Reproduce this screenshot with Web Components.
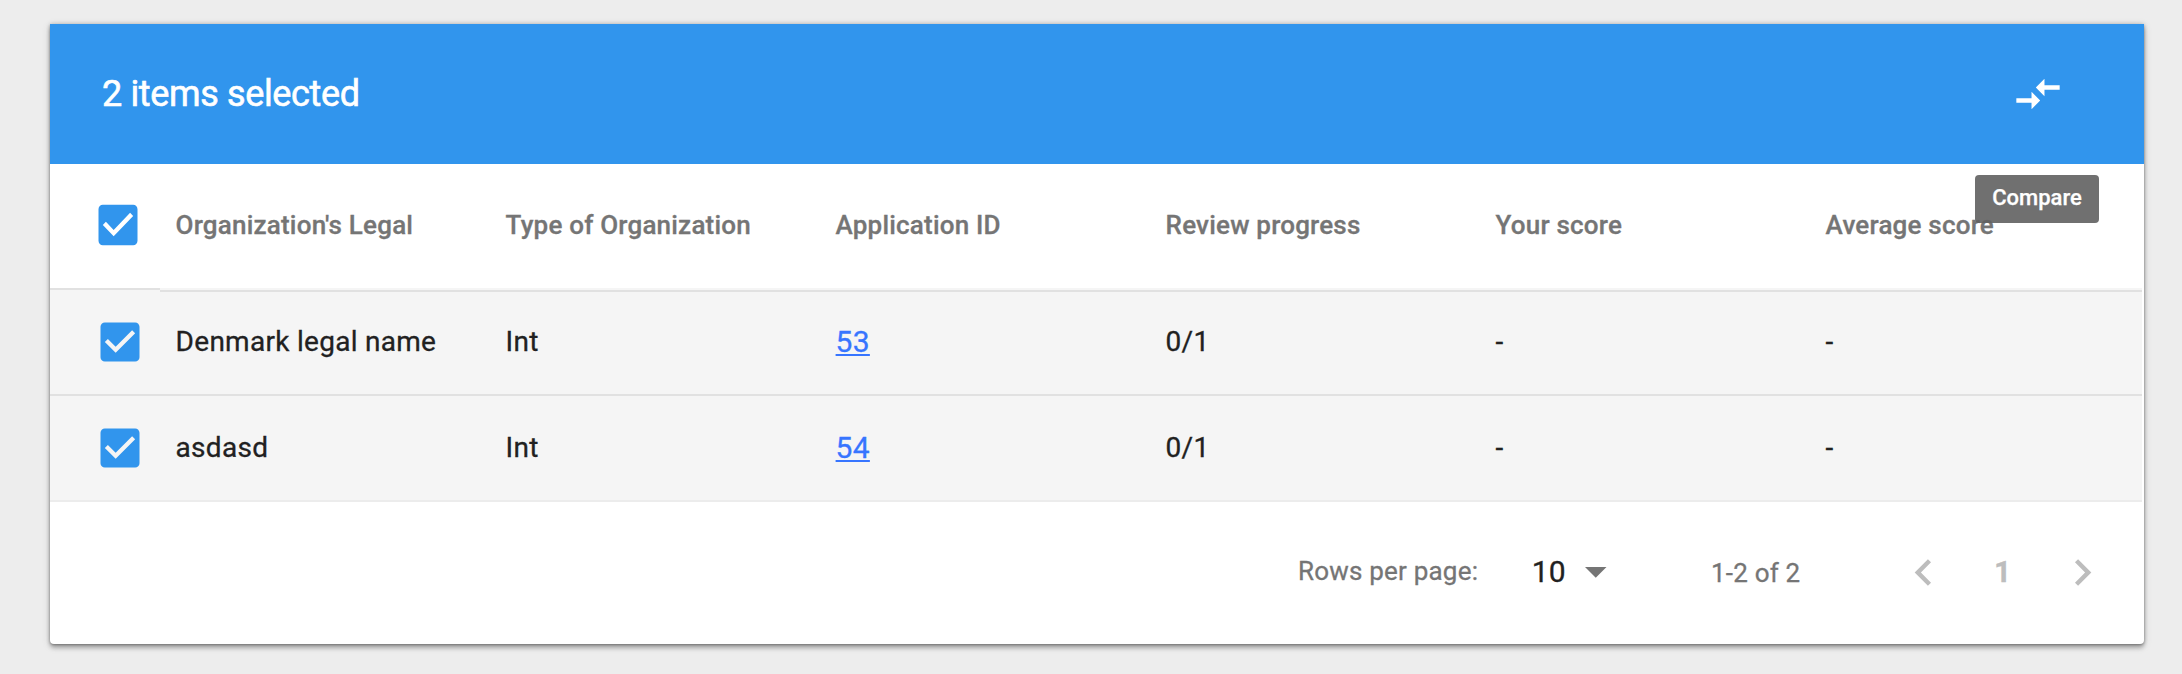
<!DOCTYPE html>
<html lang="en">
<head>
<meta charset="utf-8">
<title>Applications</title>
<style>
html,body{margin:0;padding:0}
body{background:#ededed;font-family:Roboto,"Liberation Sans",sans-serif;width:2182px;height:674px;overflow:hidden;color:#212121}
</style>
</head>
<body>
<data-card>
  <selection-bar slot="bar" label="2 items selected" tip="Compare"></selection-bar>
  <table-head></table-head>
  <table-row name="Denmark legal name" type="Int" app="53" progress="0/1" mine="-" average="-"></table-row>
  <table-row name="asdasd" type="Int" app="54" progress="0/1" mine="-" average="-" last></table-row>
  <table-pager slot="footer"></table-pager>
</data-card>
<script>
const define = (name, render) => customElements.define(name, class extends HTMLElement {
  connectedCallback() {
    if (this.shadowRoot) return;
    this.attachShadow({ mode: 'open' }).innerHTML = render(this);
  }
});
const attr = (el, n) => el.getAttribute(n) || '';

define('data-card', () => `
<style>
:host{display:flex;flex-direction:column;box-sizing:border-box;width:2094px;height:620px;margin:24px 0 0 50px;background:#fff;border-radius:0 0 4px 4px;
box-shadow:0 2px 10px rgba(0,0,0,.12),0 4px 4px rgba(0,0,0,.24),0 0 4px rgba(0,0,0,.2),0 1px 2px rgba(0,0,0,.2)}
.rows{padding-right:2px}
</style>
<slot name="bar"></slot><div class="rows"><slot></slot></div><slot name="footer"></slot>`);

define('selection-bar', el => `
<style>
:host{display:flex;align-items:center;justify-content:space-between;box-sizing:border-box;height:140px;padding:0 80px 0 52px;background:#3195ed;color:#fff}
.label{font-size:36px;line-height:42px;letter-spacing:-.36px;-webkit-text-stroke:.6px #fff}
.action{position:relative;width:52px;height:52px}
svg{display:block;width:52px;height:52px}
.tip{position:absolute;left:-37px;top:107px;width:124px;height:48px;box-sizing:border-box;padding-top:9px;text-align:center;font-size:22px;line-height:28px;font-weight:500;-webkit-text-stroke:.25px #fff;background:rgba(97,97,97,.9);border-radius:4px;z-index:2}
</style>
<span class="label">${attr(el, 'label')}</span>
<div class="action"><svg viewBox="0 0 24 24" fill="#fff"><path d="M9.01 14H2v2h7.01v3L13 15l-3.99-4v3zm5.98-1v-3H22V8h-7.01V5L11 9l3.99 4z"/></svg><div class="tip">${attr(el, 'tip')}</div></div>`);

define('check-box', () => `
<style>
:host{display:block;width:52px;height:52px}
svg{display:block;width:100%;height:100%}
</style>
<svg viewBox="0 0 24 24" preserveAspectRatio="none" fill="#3195ed"><path d="M19 3H5c-1.11 0-2 .9-2 2v14c0 1.1.89 2 2 2h14c1.11 0 2-.9 2-2V5c0-1.1-.89-2-2-2zm-9 14l-5-5 1.41-1.41L10 14.17l7.59-7.59L19 8l-9 9z"/></svg>`);

define('table-head', () => `
<style>
:host{display:grid;grid-template-columns:125.6px repeat(6,330px);height:124px;font-size:26px;font-weight:500;line-height:32px;letter-spacing:.2px;-webkit-text-stroke:.3px #757575;color:#757575;overflow:hidden}
check-box{margin:34px 0 0 42px;height:54px;-webkit-text-stroke:0}
span{padding-top:45px;white-space:nowrap}
</style>
<check-box></check-box><span>Organization's Legal</span><span>Type of Organization</span><span>Application ID</span><span>Review progress</span><span>Your score</span><span>Average score</span>`);

define('table-row', el => {
  const last = el.hasAttribute('last');
  return `
<style>
:host{display:block;background:#f5f5f5;height:${last ? 108 : 106}px;overflow:hidden}
.line{display:flex;height:${last ? 2 : 4}px}
.line i{display:block;height:2px;background:#e1e1e1}
.line i:first-child{width:110px}
.line i:last-child{flex:1;${last ? '' : 'margin-top:2px'}}
.cells{display:grid;grid-template-columns:125.6px repeat(6,330px);height:${last ? 104 : 102}px;font-size:28px;line-height:34px;letter-spacing:.28px;-webkit-text-stroke:.3px}
check-box{margin:${last ? 26 : 24}px 0 0 44px}
span{padding-top:${last ? 35 : 33}px;white-space:nowrap}
a{color:#3775ff;font-size:30px;text-decoration:underline;text-decoration-thickness:2px;text-underline-offset:2px;text-decoration-skip-ink:none}
.end{height:2px;background:#ececec}
</style>
<div class="line"><i></i><i></i></div>
<div class="cells"><check-box></check-box><span>${attr(el, 'name')}</span><span>${attr(el, 'type')}</span><span><a>${attr(el, 'app')}</a></span><span>${attr(el, 'progress')}</span><span>${attr(el, 'mine')}</span><span>${attr(el, 'average')}</span></div>
${last ? '<div class="end"></div>' : ''}`;
});

define('table-pager', () => `
<style>
:host{display:flex;height:142px;color:#757575;font-size:26px;line-height:32px}
span{display:block;white-space:nowrap;letter-spacing:.2px;-webkit-text-stroke:.3px}
.rpp{margin:53px 0 0 1248px;width:233.7px}
.size{margin-top:54px;width:53.8px;font-size:30px;color:#212121}
.arrow{margin-top:65.3px;width:21.5px;height:10.8px}
.range{margin:55px 0 0 104px;width:185.6px}
.chev{width:53px;height:53px;margin-top:44px}
.page{margin:54px 0 0 44.4px;width:61.7px;font-size:30px;font-weight:700;color:#bdbdbd}
svg{display:block}
</style>
<span class="rpp">Rows per page:</span><span class="size">10</span>
<svg class="arrow" viewBox="0 0 22 11"><path d="M0 0h22L11 11z" fill="#757575"/></svg>
<span class="range">1-2 of 2</span>
<svg class="chev" viewBox="0 0 24 24" fill="#bdbdbd"><path d="M15.41 7.41L14 6l-6 6 6 6 1.41-1.41L10.83 12z"/></svg>
<span class="page">1</span>
<svg class="chev" viewBox="0 0 24 24" fill="#bdbdbd"><path d="M10 6L8.59 7.41 13.17 12l-4.58 4.59L10 18l6-6z"/></svg>`);
</script>
</body>
</html>
